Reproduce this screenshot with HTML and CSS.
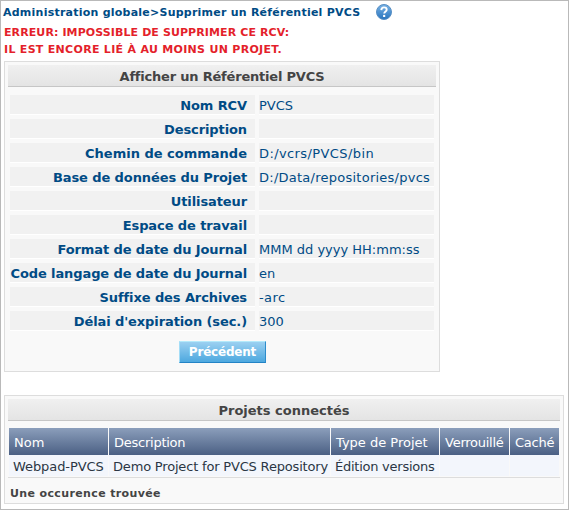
FILE: index.html
```html
<!DOCTYPE html>
<html lang="fr">
<head>
<meta charset="utf-8">
<title>Supprimer un Référentiel PVCS</title>
<link rel="stylesheet" href="styles.css">
</head>
<body>
<main class="page">
  <div class="crumbs">
    <span class="crumb-text">Administration globale&gt;Supprimer un Référentiel PVCS</span>
    <svg class="help" width="16" height="16" viewBox="0 0 16 16">
      <defs>
        <linearGradient id="ball" x1="0" y1="0" x2="0" y2="1">
          <stop offset="0" stop-color="#78b2e5"/>
          <stop offset="1" stop-color="#2874bd"/>
        </linearGradient>
      </defs>
      <circle cx="8" cy="8" r="7.5" fill="url(#ball)" stroke="#588fc4" stroke-width="1"/>
      <path d="M5.3 6.1C5.4 4.2 6.5 3.4 8 3.4s2.7.9 2.7 2.3c0 1.7-2.5 1.9-2.5 3.9" fill="none" stroke="#fff" stroke-width="1.9"/>
      <rect x="7.1" y="10.9" width="2.1" height="2.1" fill="#fff"/>
    </svg>
  </div>
  <div class="error">
    <div class="error-1">ERREUR: IMPOSSIBLE DE SUPPRIMER CE RCV:</div>
    <div class="error-2">IL EST ENCORE LIÉ À AU MOINS UN PROJET.</div>
  </div>

  <section class="panel details">
    <h2 class="panel-title tight"><span>Afficher un Référentiel PVCS</span></h2>
    <dl class="fields">
      <dt>Nom RCV</dt><dd>PVCS</dd>
      <dt>Description</dt><dd></dd>
      <dt class="normal">Chemin de commande</dt><dd class="path">D:/vcrs/PVCS/bin</dd>
      <dt>Base de données du Projet</dt><dd class="long-path">D:/Data/repositories/pvcs</dd>
      <dt>Utilisateur</dt><dd></dd>
      <dt>Espace de travail</dt><dd></dd>
      <dt>Format de date du Journal</dt><dd>MMM dd yyyy HH:mm:ss</dd>
      <dt>Code langage de date du Journal</dt><dd>en</dd>
      <dt>Suffixe des Archives</dt><dd class="path">-arc</dd>
      <dt>Délai d'expiration (sec.)</dt><dd>300</dd>
    </dl>
    <button class="back" type="button">Précédent</button>
  </section>

  <section class="panel projects">
    <h2 class="panel-title"><span>Projets connectés</span></h2>
    <div class="grid head">
      <div>Nom</div><div class="narrow">Description</div><div>Type de Projet</div><div class="narrow">Verrouillé</div><div class="narrow">Caché</div>
    </div>
    <div class="grid row">
      <div>Webpad-PVCS</div><div>Demo Project for PVCS Repository</div><div>Édition versions</div><div></div><div></div>
    </div>
    <div class="count">Une occurence trouvée</div>
  </section>
</main>
</body>
</html>
```
FILE: styles.css
```css
* { box-sizing: border-box; }
body {
  margin: 0;
  background: #fff;
  font-family: "DejaVu Sans", sans-serif;
  font-size: 13px;
  color: #004b85;
}
.page {
  width: 569px;
  height: 510px;
  border: 1px solid #b9b9b9;
  padding: 2px 4px 0 3px;
  overflow: hidden;
  white-space: nowrap;
}
.crumbs {
  display: flex;
  height: 19px;
  align-items: center;
  gap: 15px;
  font-size: 11px;
  font-weight: bold;
  letter-spacing: 0.235px;
  margin-left: -1px;
}
.crumb-text { width: 358px; }
.help { display: block; margin-bottom: 2px; }
.error {
  height: 39px;
  padding-top: 2px;
  font-size: 11px;
  font-weight: bold;
  line-height: 17px;
  color: #e41f2b;
}
.error-1 { letter-spacing: 0.1px; }
.error-2 { letter-spacing: 0.3px; }
.panel {
  border: 1px solid #ddd;
  background: #f9f9f9;
  padding: 3px;
}
.details { width: 436px; height: 311px; }
.projects { width: 560px; height: 109px; margin-top: 23px; }
.panel-title {
  margin: 0;
  height: 22px;
  border-bottom: 1px solid #c6c6c6;
  background: linear-gradient(#f0f0f0, #e4e4e4);
  color: #444;
  font-size: 13px;
  line-height: 24px;
  text-align: center;
}
.tight { letter-spacing: -0.2px; }
.fields {
  display: grid;
  grid-template-columns: 245px 175px;
  grid-auto-rows: 20px;
  gap: 4px;
  margin: 8px 2px 0;
}
.fields dt, .fields dd {
  margin: 0;
  background: #f1f1f1;
  border-bottom: 1px solid #fff;
  line-height: 22px;
}
.fields dt {
  font-weight: bold;
  text-align: right;
  padding-right: 8px;
  letter-spacing: -0.1px;
}
.fields .normal { letter-spacing: 0; }
.fields .path { letter-spacing: 0.4px; }
.fields .long-path { letter-spacing: 0.25px; }
.back {
  display: block;
  margin: 10px 0 0 171px;
  width: 87px;
  height: 22px;
  padding: 0;
  border: 1px solid;
  border-color: #b4eafb #2d8ccb #2383c5 #a4ddf7;
  background: linear-gradient(#9bd0f1, #4da8df);
  color: #fff;
  font: bold 12px/20px "DejaVu Sans", sans-serif;
  letter-spacing: -0.2px;
}
.grid {
  display: grid;
  grid-template-columns: 99px 221px 108px 69px 49px;
  column-gap: 1px;
  margin: 0 1px;
}
.head { margin-top: 7px; color: #fff; line-height: 29px; }
.head div {
  height: 27px;
  padding-left: 5px;
  background: linear-gradient(#8b9ebb, #4b6084);
}
.head .narrow { letter-spacing: -0.25px; }
.row { color: #2b3645; line-height: 23px; letter-spacing: -0.18px; }
.row div { height: 21px; padding-left: 4px; background: #f3f6fc; }
.row div:first-child { letter-spacing: -0.08px; }
.row div:nth-child(3) { letter-spacing: -0.25px; }
.count {
  margin-top: 1px;
  border-top: 1px solid #ddd;
  padding-left: 2px;
  font-size: 11px;
  font-weight: bold;
  line-height: 31px;
  letter-spacing: 0.37px;
  color: #444;
}
```
